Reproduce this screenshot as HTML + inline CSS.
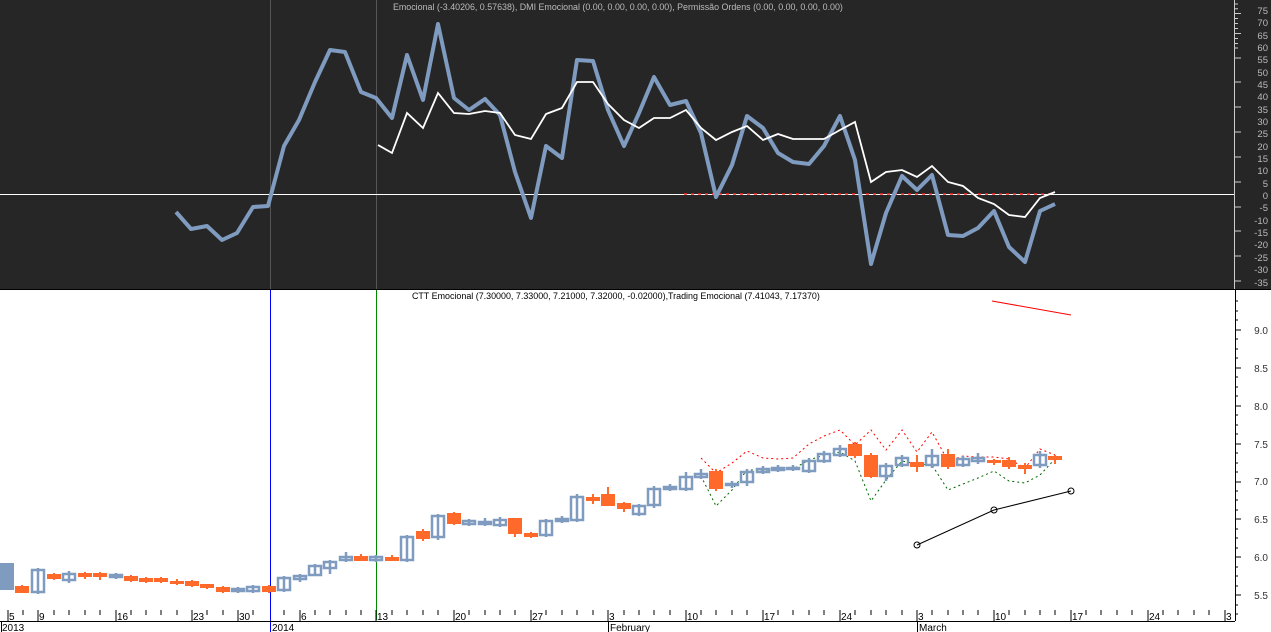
<!DOCTYPE html><html><head><style>body{margin:0;width:1271px;height:632px;overflow:hidden;background:#fff;font-family:"Liberation Sans",sans-serif}</style></head><body>
<svg width="1271" height="632" style="position:absolute;left:0;top:0" font-family="Liberation Sans, sans-serif" font-size="10">
<rect x="0" y="0" width="1271" height="290" fill="#262626"/>
<line x1="0" y1="289.5" x2="1271" y2="289.5" stroke="#000"/>
<line x1="270.5" y1="0" x2="270.5" y2="289" stroke="#555"/>
<line x1="376.5" y1="0" x2="376.5" y2="289" stroke="#555"/>
<line x1="0" y1="194.5" x2="1234" y2="194.5" stroke="#fff"/>
<text x="393" y="10" fill="#bbb" font-size="9.5" transform="translate(393 0) scale(0.935 1) translate(-393 0)">Emocional (-3.40206, 0.57638), DMI Emocional (0.00, 0.00, 0.00, 0.00), Permissão Ordens (0.00, 0.00, 0.00, 0.00)</text>
<line x1="684" y1="194" x2="1055" y2="194" stroke="#f22" stroke-width="1.5" stroke-dasharray="3 4"/>
<polyline fill="none" stroke="#7f9bbf" stroke-width="4" stroke-linejoin="round" points="176,212 191,229 207,226 222,240 237,233 253,207 268,206 284,146 299,120 315,82 330,50 345,52 361,92 376,98 392,118 407,55 423,100 438,24 454,98 469,110 485,99 500,115 515,172 531,218 546,146 562,158 577,60 593,61 608,110 624,146 639,113 654,77 670,105 686,101 701,133 716,197 732,165 747,116 763,128 778,153 793,162 809,164 824,146 840,116 855,160 871,264 886,213 902,176 917,190 932,175 948,235 963,236 978,228 994,211 1009,247 1025,262 1040,211 1055,204"/>
<polyline fill="none" stroke="#fff" stroke-width="1.8" points="378,145 392,153 407,113 423,128 438,93 454,113 469,114 485,111 500,113 515,135 531,139 546,114 562,108 577,82 593,82 608,104 624,120 639,128 654,118 670,118 686,110 701,128 716,140 732,132 747,126 763,140 778,134 793,139 809,139 824,139 840,130 855,122 871,182 886,172 902,170 917,177 932,166 948,182 963,186 978,198 994,204 1009,215 1025,217 1040,198 1055,192"/>
<line x1="1234.5" y1="0" x2="1234.5" y2="289" stroke="#ccc"/>
<path d="M1234 4h4M1234 8.8h4M1234 13.5h7M1234 18.5h4M1234 23.5h4M1234 28.5h4M1234 33.5h7M1234 38.5h4M1234 43.5h4M1234 48h4M1234 58h7M1234 82h7M1234 107h7M1234 132h7M1234 157h7M1234 182h7M1234 207h7M1234 231h7M1234 256h7M1234 281h7" stroke="#ccc"/>
<g fill="#bbb" font-size="9.5" text-anchor="end">
<text x="1268" y="14">75</text><text x="1268" y="26">70</text><text x="1268" y="39">65</text><text x="1268" y="51">60</text><text x="1268" y="63">55</text><text x="1268" y="76">50</text><text x="1268" y="88">45</text><text x="1268" y="100">40</text><text x="1268" y="113">35</text><text x="1268" y="125">30</text><text x="1268" y="137">25</text><text x="1268" y="150">20</text><text x="1268" y="162">15</text><text x="1268" y="174">10</text><text x="1268" y="187">5</text><text x="1268" y="199">0</text><text x="1268" y="211">-5</text><text x="1268" y="224">-10</text><text x="1268" y="236">-15</text><text x="1268" y="248">-20</text><text x="1268" y="261">-25</text><text x="1268" y="273">-30</text><text x="1268" y="286">-35</text></g>
<line x1="270.5" y1="290" x2="270.5" y2="632" stroke="#00f"/>
<line x1="376.5" y1="290" x2="376.5" y2="620" stroke="#080"/>
<text x="412" y="299" fill="#000" font-size="9.5" transform="translate(412 0) scale(0.94 1) translate(-412 0)">CTT Emocional (7.30000, 7.33000, 7.21000, 7.32000, -0.02000),Trading Emocional (7.41043, 7.17370)</text>
<polyline fill="none" stroke="#f00" points="992,301 1071,315"/>
<line x1="1235.5" y1="290" x2="1235.5" y2="621" stroke="#000"/>
<g fill="#333" font-size="10" text-anchor="end"><text x="1268" y="334">9.0</text><text x="1268" y="372">8.5</text><text x="1268" y="410">8.0</text><text x="1268" y="448">7.5</text><text x="1268" y="485">7.0</text><text x="1268" y="523">6.5</text><text x="1268" y="561">6.0</text><text x="1268" y="599">5.5</text></g>
<path d="M1235 330h6M1235 368h6M1235 406h6M1235 444h6M1235 482h6M1235 519h6M1235 557h6M1235 595h6M1235 301h3M1235 311h3M1235 320h3M1235 339h3M1235 349h3M1235 358h3M1235 377h3M1235 387h3M1235 396h3M1235 415h3M1235 425h3M1235 434h3M1235 453h3M1235 463h3M1235 472h3M1235 491h3M1235 500h3M1235 510h3M1235 529h3M1235 538h3M1235 548h3M1235 567h3M1235 576h3M1235 586h3M1235 605h3M1235 614h3" stroke="#000"/>
<polyline fill="none" stroke="#f00" stroke-dasharray="2 3" points="701,458 716,473 732,463 747,451 763,458 778,459 793,458 809,444 824,436 840,430 855,445 871,430 886,450 902,430 917,452 932,432 948,461 963,456 978,457 994,457 1009,459 1025,468 1040,449 1055,455"/>
<polyline fill="none" stroke="#060" stroke-dasharray="2 3" points="701,476 716,506 732,490 747,470 763,470 778,470 793,469 809,460 824,455 840,452 855,461 871,501 886,480 902,461 917,464 932,465 948,490 963,484 978,478 994,471 1009,481 1025,483 1040,475 1055,459"/>
<polyline fill="none" stroke="#000" points="917,545 994,510 1071,491"/>
<g fill="none" stroke="#000"><circle cx="917" cy="545" r="3"/><circle cx="994" cy="510" r="3"/><circle cx="1071" cy="491" r="3"/></g>
<g fill="#ff6a2a" stroke="#ff6a2a" stroke-width="2">
<path d="M22 585v8M54 573v7M85 572v7M100 572v8M131 575v7M146 577v6M161 577v6M177 579v6M192 580v7M207 584v5M223 586v7M269 585v8M361 554v6M392 555v6M423 529v12M454 512v13M515 518v19M531 532v6M593 494v10M608 487v15M624 502v10M716 469v22M855 442v16M871 453v25M917 455v17M948 449v20M994 459v6M1009 457v12M1025 463v11M1055 455v9"/>
<rect x="16" y="587" width="12" height="5"/><rect x="48" y="575" width="12" height="3"/><rect x="79" y="574" width="12" height="2"/><rect x="94" y="574" width="12" height="2"/><rect x="125" y="577" width="12" height="3"/><rect x="140" y="579" width="12" height="2"/><rect x="155" y="579" width="12" height="2"/><rect x="171" y="582" width="12" height="1"/><rect x="186" y="582" width="12" height="3"/><rect x="201" y="585" width="12" height="2"/><rect x="217" y="588" width="12" height="3"/><rect x="263" y="587" width="12" height="4"/><rect x="355" y="557" width="12" height="3"/><rect x="386" y="558" width="12" height="2"/><rect x="417" y="532" width="12" height="6"/><rect x="448" y="514" width="12" height="9"/><rect x="509" y="519" width="12" height="14"/><rect x="525" y="534" width="12" height="2"/><rect x="587" y="498" width="12" height="2"/><rect x="602" y="495" width="12" height="10"/><rect x="618" y="504" width="12" height="4"/><rect x="710" y="472" width="12" height="16"/><rect x="849" y="445" width="12" height="10"/><rect x="865" y="456" width="12" height="20"/><rect x="911" y="463" width="12" height="3"/><rect x="942" y="455" width="12" height="11"/><rect x="988" y="461" width="12" height="1"/><rect x="1003" y="461" width="12" height="5"/><rect x="1019" y="466" width="12" height="2"/><rect x="1049" y="457" width="12" height="2"/>
</g>
<rect x="0" y="563" width="14" height="27" fill="#7f9bbf"/>
<g fill="none" stroke="#7f9bbf" stroke-width="2.5">
<path d="M38 568v26M69 571v12M116 573v6M238 587v6M253 585v8M284 576v16M300 574v8M315 564v12M330 560v14M346 552v10M376 555v7M407 535v27M438 514v26M469 519v7M485 518v8M500 517v10M546 519v18M562 516v7M577 494v28M639 504v12M654 486v22M670 484v7M686 472v19M701 469v10M732 481v7M747 469v17M763 466v8M778 465v7M793 465v6M809 458v15M824 451v12M840 445v12M886 463v18M902 455v12M932 449v19M963 456v11M978 453v11M1040 451v17"/>
<rect x="32" y="570" width="12" height="22"/><rect x="63" y="574" width="12" height="6"/><rect x="110" y="575" width="12" height="2"/><rect x="232" y="589" width="12" height="2"/><rect x="247" y="587" width="12" height="4"/><rect x="278" y="578" width="12" height="12"/><rect x="294" y="576" width="12" height="3"/><rect x="309" y="566" width="12" height="9"/><rect x="324" y="562" width="12" height="6"/><rect x="340" y="557" width="12" height="3"/><rect x="370" y="557" width="12" height="3"/><rect x="401" y="537" width="12" height="23"/><rect x="432" y="516" width="12" height="21"/><rect x="463" y="521" width="12" height="3"/><rect x="479" y="522" width="12" height="2"/><rect x="494" y="520" width="12" height="5"/><rect x="540" y="521" width="12" height="14"/><rect x="556" y="519" width="12" height="2"/><rect x="571" y="497" width="12" height="23"/><rect x="633" y="506" width="12" height="8"/><rect x="648" y="489" width="12" height="16"/><rect x="664" y="487" width="12" height="2"/><rect x="680" y="477" width="12" height="12"/><rect x="695" y="474" width="12" height="3"/><rect x="726" y="484" width="12" height="1"/><rect x="741" y="472" width="12" height="10"/><rect x="757" y="469" width="12" height="3"/><rect x="772" y="468" width="12" height="2"/><rect x="787" y="468" width="12" height="1"/><rect x="803" y="461" width="12" height="10"/><rect x="818" y="454" width="12" height="7"/><rect x="834" y="449" width="12" height="6"/><rect x="880" y="466" width="12" height="10"/><rect x="896" y="458" width="12" height="7"/><rect x="926" y="456" width="12" height="9"/><rect x="957" y="459" width="12" height="6"/><rect x="972" y="458" width="12" height="3"/><rect x="1034" y="455" width="12" height="10"/>
</g>
<line x1="0" y1="621.5" x2="1235" y2="621.5" stroke="#000"/>
<path stroke="#000" d="M8 610v11M23 610v5M38 610v11M54 610v5M69 610v5M85 610v5M100 610v5M116 610v11M131 610v5M146 610v5M161 610v5M177 610v5M192 610v11M207 610v5M223 610v5M238 610v11M253 610v5M284 610v5M300 610v11M315 610v5M330 610v5M346 610v5M361 610v5M376 610v11M392 610v5M407 610v5M423 610v5M438 610v5M454 610v11M469 610v5M485 610v5M500 610v5M515 610v5M531 610v11M546 610v5M562 610v5M577 610v5M593 610v5M608 610v11M624 610v5M639 610v5M654 610v5M670 610v5M686 610v11M701 610v5M716 610v5M732 610v5M747 610v5M763 610v11M778 610v5M793 610v5M809 610v5M824 610v5M840 610v11M855 610v5M871 610v5M886 610v5M902 610v5M917 610v11M932 610v5M948 610v5M963 610v5M978 610v5M994 610v11M1009 610v5M1025 610v5M1040 610v5M1055 610v5M1071 610v11M1086 610v5M1101 610v5M1117 610v5M1132 610v5M1148 610v11M1163 610v5M1178 610v5M1194 610v5M1209 610v5M1225 610v11M1.5 622v10M608.5 622v10M917.5 622v10"/>
<g fill="#000" font-size="10"><text x="9" y="620">5</text><text x="39" y="620">9</text><text x="117" y="620">16</text><text x="193" y="620">23</text><text x="239" y="620">30</text><text x="301" y="620">6</text><text x="377" y="620">13</text><text x="455" y="620">20</text><text x="532" y="620">27</text><text x="609" y="620">3</text><text x="687" y="620">10</text><text x="764" y="620">17</text><text x="841" y="620">24</text><text x="918" y="620">3</text><text x="995" y="620">10</text><text x="1072" y="620">17</text><text x="1149" y="620">24</text><text x="1226" y="620">3</text>
<text x="2" y="631">2013</text><text x="272" y="631">2014</text><text x="610" y="631">February</text><text x="919" y="631">March</text></g>
</svg></body></html>
